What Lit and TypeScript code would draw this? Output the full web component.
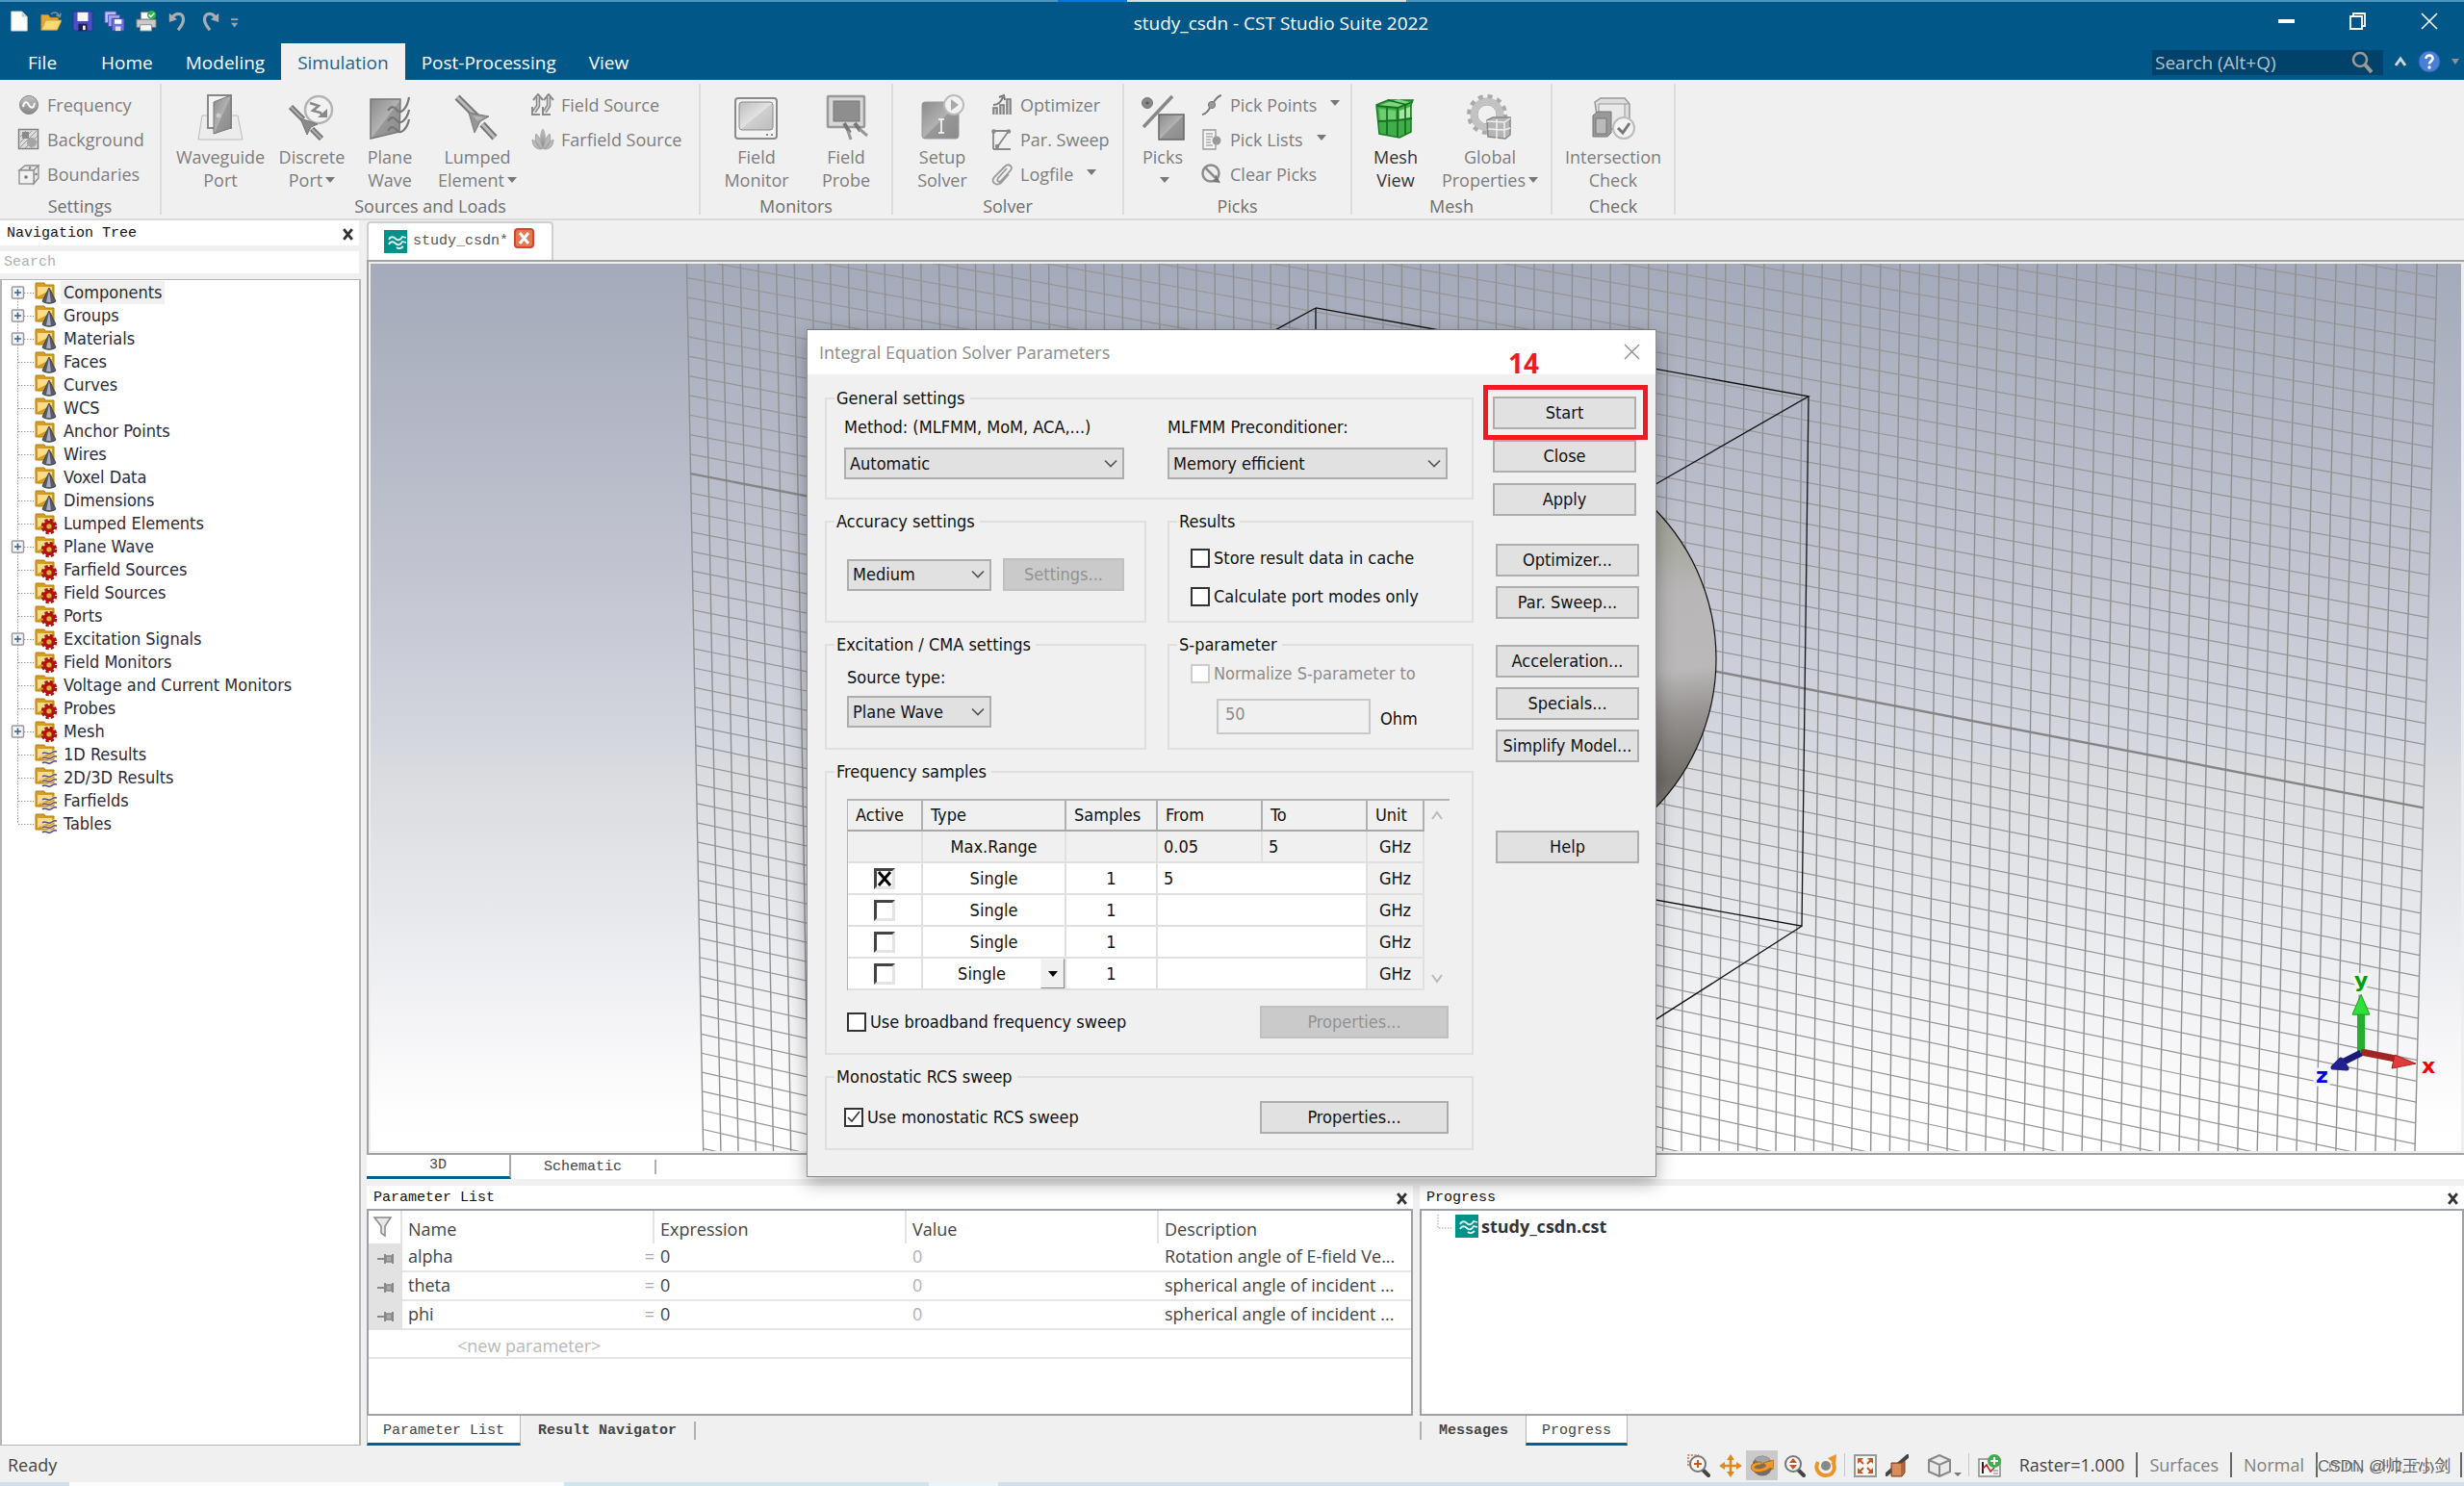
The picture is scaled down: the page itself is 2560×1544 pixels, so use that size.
import { LitElement, html, svg, css, nothing } from "lit";
import { customElement, state } from "lit/decorators.js";
import { classMap } from "lit/directives/class-map.js";

const G = "#8c8c8c";

/** Small 24x24 glyphs. */
const small: Record<string, unknown> = {
  frequency: svg`<circle cx="12" cy="12" r="9.5" fill="url(#gg)" stroke="#858585"/><path d="M6 14c1-6 4-6 6-2s5 4 6-2" fill="none" stroke="#fff" stroke-width="2"/>`,
  background: svg`<rect x="1.5" y="1.5" width="20" height="20" fill="#dcdcdc" stroke="#808080" stroke-width="1.5"/><path d="M3 9l6-6M3 15L15 3M3 20L20 3M8 21L21 8M14 21l7-7" stroke="#9a9a9a"/><rect x="5" y="4" width="7" height="7" fill="#8a8a8a"/><circle cx="15" cy="15" r="5" fill="#a5a5a5"/>`,
  boundaries: svg`<path d="M2 8l6-5h14l-5 5zM17 8l5-5v13l-5 6z" fill="#e6e6e6" stroke="${G}" stroke-width="1.3"/><rect x="2" y="8" width="15" height="14" fill="#f2f2f2" stroke="${G}" stroke-width="1.3"/><circle cx="9" cy="15" r="1.8" fill="#777"/><circle cx="13" cy="5.500" r="1.200" fill="#777"/><circle cx="19.500" cy="12" r="1.200" fill="#777"/>`,
  fieldsource: svg`<path d="M7 4v9l-4 6M18 4v9l-4 6" fill="none" stroke="#8a8a8a" stroke-width="4.500"/><path d="M7 4v9l-4 6M18 4v9l-4 6" fill="none" stroke="#d5d5d5" stroke-width="1.500"/><path d="M2 7l5-6 5 6M13 7l5-6 5 6M1 14v8h8M12 14v8h8" fill="none" stroke="#8a8a8a" stroke-width="2"/>`,
  farfield: svg`<path d="M12 1c3 5 3 11 0 21c-3-10-3-16 0-21z" fill="url(#gg)" stroke="#aaa"/><path d="M5 6c4 4 6 9 6 16C5 20 3 12 5 6zM19 6c-4 4-6 9-6 16c6-2 8-10 6-16zM1 12c4 2 7 5 9 10C4 22 1 18 1 12zM23 12c-4 2-7 5-9 10c6 0 9-4 9-10z" fill="#b9b9b9" stroke="#9c9c9c" stroke-width=".8"/>`,
  optimizer: svg`<path d="M3 22V15h4v7M10 22v-10h4v10M17 22V6h4v16" fill="#bbb" stroke="#777" stroke-width="1.500"/><path d="M3 12c4 0 8-3 10-8M9 4l5-2 1 5" fill="none" stroke="#777" stroke-width="2"/>`,
  sweep: svg`<path d="M3 22V3h16L7 20M3 22h18" fill="none" stroke="#888" stroke-width="1.800"/><circle cx="3.500" cy="3.500" r="2.200" fill="#888"/><circle cx="19" cy="3.500" r="2.200" fill="#888"/><circle cx="7" cy="19" r="2.200" fill="#888"/>`,
  logfile: svg`<path d="M17 6L8 16c-2 3 1 5 3 3L21 8c3-4-2-8-6-4L4 15c-4 5 2 10 7 6l8-9" fill="none" stroke="#999" stroke-width="1.800"/>`,
  pickpoints: svg`<path d="M2 22c6-1 7-6 10-10s5-9 10-10" fill="none" stroke="#777" stroke-width="1.800"/><circle cx="12" cy="12" r="3.600" fill="#999" stroke="#777"/>`,
  picklists: svg`<path d="M3 2h13v20H3z" fill="#f4f4f4" stroke="#999" stroke-width="1.300"/><path d="M6 6h7M6 9h7M6 12h5M6 15h5M6 18h7" stroke="#888" stroke-width="1.200"/><circle cx="17" cy="13" r="4.500" fill="#999"/>`,
  clearpicks: svg`<circle cx="11" cy="11" r="8.500" fill="#eee" stroke="#8c8c8c" stroke-width="2.500"/><path d="M5 5l13 13" stroke="#8c8c8c" stroke-width="2.500"/><path d="M12 20c3-1 4-4 4-8l5 9z" fill="#777"/>`,
};

/** Large 48x48 glyphs. */
const big: Record<string, unknown> = {
  waveguide: svg`<path d="M5 22h37l5 25H1z" fill="#ececec" stroke="#bbb"/><path d="M11 1h24v34H11z" fill="#f4f4f4" stroke="#888" stroke-width="2"/><path d="M17 8l18-7v34l-18 6z" fill="url(#gd)" stroke="#777"/><circle cx="22" cy="22" r="2.500" fill="#ccc"/>`,
  discrete: svg`<circle cx="31" cy="16" r="14" fill="#f2f2f2" stroke="#b4b4b4" stroke-width="2.500"/><path d="M22 9l9 3-6 5 8 2 2 4" fill="none" stroke="#888" stroke-width="2.500"/><path d="M30 24h10v-9z" fill="#888"/><path d="M2 13l13 13M24 36l10 10" stroke="#777" stroke-width="6"/><path d="M2 13l13 13M24 36l10 10" stroke="#b0b0b0" stroke-width="2"/><path d="M12 25l18 6-7 3-4 8z" fill="#8a8a8a" stroke="#777"/>`,
  plane: svg`<path d="M4 5h31l-1 34-30 7z" fill="url(#gd)" stroke="#777" stroke-width="1.500"/><path d="M22 17c4-6 7-4 10 0s10-2 12-14M22 28c4-6 7-4 10 0s10-2 12-12M22 38c4-6 7-4 10 0s10-2 12-12" fill="none" stroke="#777" stroke-width="2.200"/>`,
  lumped: svg`<path d="M3 3l20 20M29 31l13 14" stroke="#777" stroke-width="7"/><path d="M3 3l20 20M29 31l13 14" stroke="#bbb" stroke-width="3"/><path d="M15 19l21 4-9 5-6 12z" fill="#969696" stroke="#777"/><path d="M19 22l12 2-7 4z" fill="#b4b4b4"/>`,
  monitor: svg`<rect x="2" y="4" width="43" height="42" rx="3" fill="#f2f2f2" stroke="#8a8a8a" stroke-width="2"/><rect x="6" y="8" width="35" height="29" rx="3" fill="url(#gl)" stroke="#888"/><path d="M34 42h2M39 42h2" stroke="#888" stroke-width="2"/>`,
  probe: svg`<rect x="5" y="2" width="38" height="32" rx="1" fill="#d8d8d8" stroke="#999" stroke-width="2.500"/><rect x="11" y="7" width="27" height="21" fill="#8e8e8e" stroke="#777"/><path d="M22 30l6 10M33 30l6 8" stroke="#777" stroke-width="4"/><path d="M26 38l3 9M38 36l8 7" stroke="#999" stroke-width="3"/>`,
  setup: svg`<rect x="3" y="8" width="38" height="38" rx="3" fill="url(#gd)" stroke="#999"/><path d="M20 26h6M23 26v14M20 40h6" stroke="#fff" stroke-width="1.600"/><circle cx="36" cy="11" r="10" fill="#f3f3f3" stroke="#bbb" stroke-width="2"/><path d="M33 5l8 6-8 6z" fill="#aaa"/>`,
  picks: svg`<circle cx="8" cy="9" r="5.500" fill="#888" stroke="#777"/><circle cx="8" cy="9" r="1.500" fill="#555"/><path d="M34 2L4 34" stroke="#888" stroke-width="3.500"/><rect x="20" y="21" width="26" height="26" fill="url(#gd)" stroke="#666" stroke-width="1.500"/>`,
  mesh: svg`<path d="M4 11l12-5h26l-2 5v28l-12 6-21-4z" fill="#3fae49" stroke="#1c7a26" stroke-width="1.500"/><path d="M5 12l21 2 15-5-14-4z" fill="#7ed67e"/><path d="M7 15l17 2v10l-16 1z" fill="#6dcf70"/><path d="M28 17l11-4v11l-11 3z" fill="#a5e6a0"/><path d="M5 12l21 2 15-6M26 14v31M5 28l21-1 15-2M15 13v29M34 10v32M16 6l20 5" fill="none" stroke="#176f22" stroke-width="1.800"/>`,
  global: svg`<circle cx="21" cy="21" r="14" fill="none" stroke="#c2c2c2" stroke-width="7"/><circle cx="21" cy="21" r="19" fill="none" stroke="#aaa" stroke-width="4" stroke-dasharray="5 4.950"/><circle cx="21" cy="21" r="10" fill="#f0f0f0" stroke="#aaa"/><path d="M21 27l6-3h18v18l-5 4-18-2z" fill="#b5b5b5" stroke="#888" stroke-width="1.500"/><path d="M21 28l18 1 6-4M31 26v20M22 36l17 1 6-2M39 29v16" fill="none" stroke="#eee" stroke-width="1.500"/>`,
  intersection: svg`<path d="M5 8l6-4h25l5 6v26H9z" fill="#ddd" stroke="#999" stroke-width="1.500"/><path d="M9 10h27v26H9zM36 10l5 0" fill="#e9e9e9" stroke="#999"/><path d="M3 22l5-4h14v22l-4 4H3z" fill="#999" stroke="#777"/><path d="M6 25h11v16H6z" fill="#bbb" stroke="#777"/><circle cx="35" cy="35" r="11" fill="#f3f3f3" stroke="#bbb" stroke-width="2"/><path d="M29 35l5 5 7-10" fill="none" stroke="#777" stroke-width="3"/>`,
};

const defs = svg`<defs>
  <linearGradient id="gg" x1="0" y1="0" x2="0" y2="1"><stop offset="0" stop-color="#c4c4c4"/><stop offset="1" stop-color="#858585"/></linearGradient>
  <linearGradient id="gd" x1="0" y1="0" x2="1" y2="1"><stop offset="0" stop-color="#8b8b8b"/><stop offset=".5" stop-color="#b2b2b2"/><stop offset=".52" stop-color="#989898"/><stop offset="1" stop-color="#8b8b8b"/></linearGradient>
  <linearGradient id="gl" x1="0" y1="0" x2="1" y2="1"><stop offset="0" stop-color="#bdbdbd"/><stop offset=".5" stop-color="#e2e2e2"/><stop offset=".52" stop-color="#cfcfcf"/><stop offset="1" stop-color="#bdbdbd"/></linearGradient>
</defs>`;

const icon = (name: string, size: "small" | "big") =>
  size === "small"
    ? html`<svg class="ic24" viewBox="0 0 24 24" aria-hidden="true">${defs}${small[name]}</svg>`
    : html`<svg class="ic48" viewBox="0 0 48 48" aria-hidden="true">${defs}${big[name]}</svg>`;

const quick = [
  ["New", svg`<path d="M3 1h12l6 6v16H3z" fill="#fdfdfd" stroke="#c9c9c9"/><path d="M15 1v6h6z" fill="#ccc"/>`],
  ["Open", svg`<path d="M1 22V5h8l2 3h9v4" fill="#e5a93a" stroke="#c98a1b"/><path d="M1 22l5-11h18l-5 11z" fill="#ffd873" stroke="#d29a2a"/><path d="M12 4c4-3 8-2 9 2M18 5l4 2 1-4" fill="none" stroke="#7f98a8" stroke-width="1.500"/>`],
  ["Save", svg`<path d="M1 1h22v22H3l-2-2z" fill="#4c4fc4" stroke="#2c2f96"/><path d="M6 2h12v10H6z" fill="#f6f6ff"/><path d="M7 15h10v8H7z" fill="#1d1f4a"/><path d="M12 17h3v5h-3z" fill="#eee"/>`],
  ["Save all", svg`<path d="M1 1h13v13H1z" fill="#b9bdf0" stroke="#4a4fb8"/><path d="M5 5h13v13H5z" fill="#a2a8ea" stroke="#4a4fb8"/><path d="M9 9h14v14H9z" fill="#6d73d8" stroke="#3a3f9e"/><path d="M12 10h8v5h-8z" fill="#fff"/><path d="M13 18h6v5h-6z" fill="#dde"/>`],
  ["Print", svg`<path d="M6 2h11v8H6z" fill="#fff" stroke="#999"/><path d="M1 10h22v9H1z" fill="#c9c9c9" stroke="#777"/><path d="M5 16h13v7H5z" fill="#f5f5f5" stroke="#888"/><circle cx="18" cy="5" r="5" fill="#31b54a"/><path d="M15 5l2 2 4-4" fill="none" stroke="#fff" stroke-width="1.500"/>`],
  ["Undo", svg`<path d="M5 10c2-8 13-9 13 0 0 5-3 8-6 12" fill="none" stroke="#a7adb2" stroke-width="3.500"/><path d="M2 3v10l9-3z" fill="#a7adb2"/>`],
  ["Redo", svg`<path d="M19 10C17 2 6 1 6 10c0 5 3 8 6 12" fill="none" stroke="#a7adb2" stroke-width="3.500"/><path d="M22 3v10l-9-3z" fill="#a7adb2"/>`],
] as const;

type Big = { icon: string; lines: [string, string]; drop?: boolean; on?: boolean };
type Small = { icon: string; text: string; drop?: boolean };
const ribbon: { id: string; label: string; bigs?: Big[]; after?: Small[] }[] = [
  { id: "settings", label: "Settings", after: [{ icon: "frequency", text: "Frequency" }, { icon: "background", text: "Background" }, { icon: "boundaries", text: "Boundaries" }] },
  {
    id: "sources", label: "Sources and Loads",
    bigs: [{ icon: "waveguide", lines: ["Waveguide", "Port"] }, { icon: "discrete", lines: ["Discrete", "Port"], drop: true }, { icon: "plane", lines: ["Plane", "Wave"] }, { icon: "lumped", lines: ["Lumped", "Element"], drop: true }],
    after: [{ icon: "fieldsource", text: "Field Source" }, { icon: "farfield", text: "Farfield Source" }],
  },
  { id: "monitors", label: "Monitors", bigs: [{ icon: "monitor", lines: ["Field", "Monitor"] }, { icon: "probe", lines: ["Field", "Probe"] }] },
  { id: "solver", label: "Solver", bigs: [{ icon: "setup", lines: ["Setup", "Solver"] }], after: [{ icon: "optimizer", text: "Optimizer" }, { icon: "sweep", text: "Par. Sweep" }, { icon: "logfile", text: "Logfile", drop: true }] },
  { id: "picks", label: "Picks", bigs: [{ icon: "picks", lines: ["Picks", ""], drop: true }], after: [{ icon: "pickpoints", text: "Pick Points", drop: true }, { icon: "picklists", text: "Pick Lists", drop: true }, { icon: "clearpicks", text: "Clear Picks" }] },
  { id: "mesh", label: "Mesh", bigs: [{ icon: "mesh", lines: ["Mesh", "View"], on: true }, { icon: "global", lines: ["Global", "Properties"], drop: true }] },
  { id: "check", label: "Check", bigs: [{ icon: "intersection", lines: ["Intersection", "Check"] }] },
];

type Node = [string, "cone" | "gear" | "wave", boolean?];
const tree: Node[] = [
  ["Components", "cone", true], ["Groups", "cone", true], ["Materials", "cone", true], ["Faces", "cone"], ["Curves", "cone"], ["WCS", "cone"],
  ["Anchor Points", "cone"], ["Wires", "cone"], ["Voxel Data", "cone"], ["Dimensions", "cone"], ["Lumped Elements", "gear"],
  ["Plane Wave", "gear", true], ["Farfield Sources", "gear"], ["Field Sources", "gear"], ["Ports", "gear"], ["Excitation Signals", "gear", true],
  ["Field Monitors", "gear"], ["Voltage and Current Monitors", "gear"], ["Probes", "gear"], ["Mesh", "gear", true],
  ["1D Results", "wave"], ["2D/3D Results", "wave"], ["Farfields", "wave"], ["Tables", "wave"],
];

const folderMark = {
  cone: svg`<path d="M15 7l-7 14c3 3 11 3 14 0z" fill="#565b68" stroke="#2f323a" stroke-width=".8"/><path d="M15 8l-3 14h5z" fill="#a9aec0"/>`,
  gear: svg`<circle cx="15" cy="15" r="6.500" fill="none" stroke="#b01313" stroke-width="3.500" stroke-dasharray="3.100 2"/><circle cx="15" cy="15" r="4.500" fill="none" stroke="#b01313" stroke-width="3.500"/><circle cx="15" cy="15" r="2" fill="#e3b04b"/>`,
  wave: svg`<path d="M8 11c3-3 5 1 8 0s3-3 7-2M8 16c3-3 5 1 8 0s3-3 7-2M8 21c3-3 5 1 8 0s3-3 7-2" fill="none" stroke="#f6e7b4" stroke-width="3"/><path d="M8 11c3-3 5 1 8 0s3-3 7-2M8 16c3-3 5 1 8 0s3-3 7-2M8 21c3-3 5 1 8 0s3-3 7-2" fill="none" stroke="#544f92" stroke-width="1.500"/>`,
};

const cstLogo = html`<svg class="ic24" viewBox="0 0 24 24" aria-hidden="true"><rect width="24" height="24" fill="#00918a"/><path d="M5 10c2-4 5-3 7-1s5 2 7-2l4 1M5 15c2-4 5-3 7-1s5 2 7-2l4 1M13 18c2 2 5 1 7-1" fill="none" stroke="#e4f5f3" stroke-width="1.800"/></svg>`;

@customElement("cst-viewport")
export class CstViewport extends LitElement {
  static styles = css`
    :host { display: flex; flex-direction: column; min-height: 0; }
    .scene { flex: 1 1 0; min-height: 0; width: 100%; display: block; }
    .axis { font: bold 22px "DejaVu Sans", sans-serif; paint-order: stroke; stroke: #f4f5f8; stroke-width: 7px; stroke-linejoin: round; }
  `;

  private verticals() {
    const n = 92, k = 0.0614;
    let d = "";
    for (let i = 0; i <= n; i++) {
      const u = i / n, f = (u * (1 - k)) / (1 - k * u);
      d += `M${(714.5 + 1818.5 * f).toFixed(1)} 274L${(731.7 + 1778.3 * f).toFixed(1)} 1197`;
    }
    return d;
  }

  private horizontal(j: number) {
    const yl = 492.4 + 20.3 * j - 0.007 * j * j, yr = 840 + 21.95 * j - 0.006 * j * j;
    const xl = 714.5 + ((yl - 274) * 17.2) / 923, xr = 2533 - ((yr - 274) * 23) / 923;
    return `M${xl.toFixed(1)} ${yl.toFixed(1)}L${xr.toFixed(1)} ${yr.toFixed(1)}`;
  }

  render() {
    let rows = "";
    for (let j = -26; j <= 35; j++) if (j !== 0) rows += this.horizontal(j);
    return html`<svg class="scene" viewBox="386 274 2172 923" preserveAspectRatio="none" role="img" aria-label="3D view">
      <defs>
        <linearGradient id="sky" x1="0" y1="0" x2="0" y2="1">
          <stop offset="0" stop-color="#a4aaba"/><stop offset=".36" stop-color="#c3c5d1"/><stop offset=".55" stop-color="#d5d8e0"/>
          <stop offset=".57" stop-color="#dadbdf"/><stop offset=".75" stop-color="#e9eaee"/><stop offset=".96" stop-color="#fefefe"/><stop offset="1" stop-color="#ffffff"/>
        </linearGradient>
        <linearGradient id="ball" gradientUnits="userSpaceOnUse" x1="1740" y1="500" x2="1775" y2="860">
          <stop offset="0" stop-color="#9b9d91"/><stop offset=".18" stop-color="#a8a99f"/><stop offset=".32" stop-color="#b8b6b6"/><stop offset=".54" stop-color="#bab8b8"/>
          <stop offset=".68" stop-color="#93908e"/><stop offset=".85" stop-color="#716e68"/><stop offset="1" stop-color="#8a8781"/>
        </linearGradient>
      </defs>
      <rect x="386" y="274" width="2172" height="923" fill="url(#sky)"/>
      <path d="${this.verticals()}" stroke="#8f8f8f" stroke-width="1.4" fill="none"/>
      <path d="${rows}" stroke="#959595" stroke-width="1.2" fill="none"/>
      <path d="${this.horizontal(0)}" stroke="#858585" stroke-width="2.4"/>
      <circle cx="1562" cy="685" r="222" fill="url(#ball)" stroke="#111" stroke-width="1.2"/>
      <path d="M1368 320L1326 343L1090 470M1368 320L1880 412L1720 504L1500 630M1368 320V800M1880 412L1873 963L1500 896M1873 963L1720 1061L1500 1196" fill="none" stroke="#111" stroke-width="1.3"/>
      <path d="M2454 1094V1052" stroke="#25b02c" stroke-width="8"/><path d="M2454 1034l9 21h-18z" fill="#2ee03a" stroke="#1c9b24"/>
      <path d="M2454 1094l36 7" stroke="#a32222" stroke-width="7"/><path d="M2511 1106l-22-9-3 14z" fill="#e33a3a" stroke="#a32222"/>
      <path d="M2454 1095l-18 9" stroke="#1a1a78" stroke-width="7"/><path d="M2425 1110l8-8 6 9z" fill="#22228f" stroke="#22228f" stroke-width="5" stroke-linejoin="round"/>
      <text class="axis" x="2447" y="1027" fill="#00a000">y</text>
      <text class="axis" x="2517" y="1116" fill="#f00000">x</text>
      <text class="axis" x="2407" y="1126" fill="#0000f0">z</text>
    </svg>`;
  }
}

@customElement("solver-dialog")
export class SolverDialog extends LitElement {
  static styles = css`
    :host { display: block; font: 18px/22px "DejaVu Sans Condensed", "DejaVu Sans", sans-serif; color: #111; }
    * { box-sizing: border-box; }
    .window { background: #f0f0f0; border: 1px solid #8e8e92; border-top-color: #777b88; box-shadow: 0 6px 18px rgba(0, 0, 0, .32); padding-bottom: 27px; }
    .title { display: flex; align-items: center; justify-content: space-between; height: 46px; padding: 0 16px 1px 12px; background: #fff; }
    .title h2 { margin: 0; font: 18px/24px "Open Sans", "Noto Sans", sans-serif; color: #8a8a8a; }
    .x { border: 0; padding: 0; background: none; line-height: 0; }
    .body { display: flex; align-items: flex-start; gap: 20px; padding: 15px 0 0 18px; }
    .groups { width: 674px; display: flex; flex-direction: column; gap: 13px; }
    .pair { display: grid; grid-template-columns: 334px 318px; gap: 22px; }
    fieldset { margin: 0; padding: 0; min-width: 0; border: 2px solid #dfdfdf; }
    legend { margin-left: 8px; padding: 0 5px 0 2px; line-height: 20px; white-space: nowrap; }
    .general { min-height: 93px; padding: 9px 0 0 18px; }
    .cols { display: grid; grid-template-columns: 291px 291px; gap: 45px; }
    .stack { display: flex; flex-direction: column; align-items: flex-start; gap: 10px; white-space: nowrap; }
    .mid { min-height: 93px; padding: 28px 0 0 21px; }
    .results { min-height: 93px; padding: 17px 0 0 22px; }
    .low { min-height: 97px; }
    .source { padding: 13px 0 0 21px; }
    .source .stack { gap: 8px; }
    .sparam { padding: 9px 0 0 22px; }
    .freq { min-height: 282px; padding: 18px 0 0 21px; }
    .mono { min-height: 64px; padding: 15px 0 0 18px; }
    .line { display: flex; align-items: center; gap: 12px; }
    .spread { display: flex; align-items: center; justify-content: space-between; padding-right: 24px; }
    .freq .spread { margin-top: 16px; }
    .checks { display: flex; flex-direction: column; gap: 18px; }
    .check { display: flex; align-items: center; gap: 4px; white-space: nowrap; }
    .check input { appearance: none; flex: none; margin: 0; width: 20px; height: 20px; border: 2px solid #333; background: #fff; }
    .check input:checked { background: #fff url('data:image/svg+xml,<svg xmlns="http://www.w3.org/2000/svg" viewBox="0 0 16 16"><path d="M2 8l4 4 8-10" fill="none" stroke="%23333" stroke-width="1.6"/></svg>'); }
    .check input:disabled { border-color: #ccc; }
    .off { color: #8c8c8c; }
    .select { display: grid; align-items: center; width: 291px; }
    .select.short { width: 150px; }
    .select select, .select svg { grid-area: 1 / 1; }
    .select svg { justify-self: end; margin-right: 6px; pointer-events: none; }
    select { appearance: none; width: 100%; height: 33px; margin: 0; padding: 0 4px; border: 2px solid #adadad; border-radius: 0; background: #e1e1e1; color: inherit; font: inherit; }
    button.btn { width: 149px; height: 34px; padding: 0; border: 2px solid #adadad; border-radius: 0; background: #e1e1e1; color: inherit; font: inherit; white-space: nowrap; }
    button.btn:disabled { background: #cacaca; border-color: #c0c0c0; color: #929292; }
    button.btn.wide { width: 196px; }
    button.btn.set { width: 126px; }
    .ohm { display: flex; align-items: center; gap: 10px; margin: 15px 0 0 27px; }
    .ohm input { width: 160px; height: 37px; padding: 0 7px 6px; border: 2px solid #c8c8c8; background: #f0f0f0; color: #8c8c8c; font: inherit; }
    .ohm label { padding-top: 4px; }
    .actions { display: flex; flex-direction: column; padding-top: 8px; }
    .set1 { display: flex; flex-direction: column; gap: 11px; }
    .set2 { display: flex; flex-direction: column; gap: 10px; margin: 29px 0 0 3px; }
    .set3 { margin-top: 27px; }
    .set4 { margin-top: 71px; }
    .start { position: relative; }
    .mark { position: absolute; left: -10px; top: -12px; width: 171px; height: 57px; border: 5px solid #ee1b22; pointer-events: none; }
    .num { position: absolute; left: 16px; top: -53px; font: bold 28px/36px "Open Sans", "Noto Sans", sans-serif; color: #ee1b22; }
    .grid { display: flex; width: 626px; border: 2px solid #b4b4b4; border-width: 2px 0 0 1px; }
    table { width: 599px; table-layout: fixed; border-collapse: separate; border-spacing: 0; }
    th, td { height: 33px; padding: 0; font-weight: normal; text-align: center; line-height: 22px; border-right: 2px solid #e0e0e0; border-bottom: 2px solid #e0e0e0; background: #fff; }
    th { height: 32px; padding-left: 8px; text-align: left; background: #f0f0f0; border-right-color: #b0b0b0; border-bottom-color: #a8a8a8; }
    .ro, td.unit { background: #f0f0f0; }
    .lft { text-align: left; padding-left: 6px; }
    .c1 { width: 78px; } .c2 { width: 149px; } .c3 { width: 95px; } .c4 { width: 109px; } .c5 { width: 109px; } .c6 { width: 59px; }
    td input { appearance: none; display: block; margin: 0 auto; width: 22px; height: 22px; border: 3px solid #333; border-color: #444 #e4e4e4 #e4e4e4 #444; background: #fff; }
    td input:checked { background: #fff url('data:image/svg+xml,<svg xmlns="http://www.w3.org/2000/svg" viewBox="0 0 16 16"><path d="M2 1l12 14M14 1L2 15" fill="none" stroke="%23000" stroke-width="3"/></svg>'); }
    .cell { display: flex; align-items: center; height: 31px; }
    .cell span { flex: 1; }
    .cell button { width: 25px; height: 31px; padding: 0; line-height: 0; border: 1px solid #f8f8f8; border-right-color: #888; border-bottom-color: #888; background: #f0f0f0; }
    .scroll { display: flex; flex-direction: column; justify-content: space-between; align-items: center; width: 27px; padding: 9px 0 6px; }
  `;

  @state() private active = [true, false, false, false];

  private chev() {
    return html`<svg width="16" height="10" viewBox="0 0 16 10" aria-hidden="true"><path d="M2 1.500l6 6 6-6" fill="none" stroke="#555" stroke-width="1.700"/></svg>`;
  }

  private row(on: boolean, i: number) {
    const last = i === 3;
    return html`<tr>
      <td><input type="checkbox" aria-label="Sample ${i + 1} active" .checked=${on} @change=${() => (this.active = this.active.map((v, k) => (k === i ? !v : v)))} /></td>
      <td>${last
        ? html`<div class="cell"><span>Single</span><button aria-label="Choose type"><svg width="10" height="6" viewBox="0 0 10 6"><path d="M0 0h10L5 6z" fill="#000"/></svg></button></div>`
        : "Single"}</td>
      <td>1</td><td class="lft" colspan="2">${i === 0 ? "5" : nothing}</td><td class="unit">GHz</td>
    </tr>`;
  }

  render() {
    return html`<section class="window" role="dialog" aria-labelledby="dt">
      <div class="title"><h2 id="dt">Integral Equation Solver Parameters</h2>
        <button class="x" aria-label="Close dialog"><svg width="17" height="17" viewBox="0 0 17 17"><path d="M1 1l15 15M16 1L1 16" stroke="#888" stroke-width="1.200"/></svg></button></div>
      <div class="body">
        <div class="groups">
          <fieldset><legend>General settings</legend><div class="general cols">
            <div class="stack"><label for="m">Method: (MLFMM, MoM, ACA,...)</label><div class="select"><select id="m"><option>Automatic</option></select>${this.chev()}</div></div>
            <div class="stack"><label for="p">MLFMM Preconditioner:</label><div class="select"><select id="p"><option>Memory efficient</option></select>${this.chev()}</div></div>
          </div></fieldset>
          <div class="pair">
            <fieldset><legend>Accuracy settings</legend><div class="mid"><div class="line">
              <div class="select short"><select aria-label="Accuracy"><option>Medium</option></select>${this.chev()}</div>
              <button class="btn set" disabled>Settings...</button></div></div></fieldset>
            <fieldset><legend>Results</legend><div class="results checks">
              <label class="check"><input type="checkbox" />Store result data in cache</label>
              <label class="check"><input type="checkbox" />Calculate port modes only</label></div></fieldset>
          </div>
          <div class="pair">
            <fieldset><legend>Excitation / CMA settings</legend><div class="low source"><div class="stack">
              <label for="s">Source type:</label><div class="select short"><select id="s"><option>Plane Wave</option></select>${this.chev()}</div></div></div></fieldset>
            <fieldset><legend>S-parameter</legend><div class="low sparam">
              <label class="check off"><input type="checkbox" disabled />Normalize S-parameter to</label>
              <div class="ohm"><input id="z" value="50" disabled /><label for="z">Ohm</label></div></div></fieldset>
          </div>
          <fieldset><legend>Frequency samples</legend><div class="freq">
            <div class="grid"><table>
              <thead><tr><th class="c1">Active</th><th class="c2">Type</th><th class="c3">Samples</th><th class="c4">From</th><th class="c5">To</th><th class="c6">Unit</th></tr></thead>
              <tbody>
                <tr><td class="ro"></td><td class="ro">Max.Range</td><td class="ro"></td><td class="ro lft">0.05</td><td class="ro lft">5</td><td class="unit">GHz</td></tr>
                ${this.active.map((v, i) => this.row(v, i))}
              </tbody></table>
              <div class="scroll" aria-hidden="true">
                <svg width="12" height="12" viewBox="0 0 12 12"><path d="M1 10l5-7 5 7" fill="none" stroke="#bbb" stroke-width="2"/></svg>
                <svg width="12" height="12" viewBox="0 0 12 12"><path d="M1 2l5 7 5-7" fill="none" stroke="#bbb" stroke-width="2"/></svg>
              </div></div>
            <div class="spread"><label class="check"><input type="checkbox" />Use broadband frequency sweep</label><button class="btn wide" disabled>Properties...</button></div>
          </div></fieldset>
          <fieldset><legend>Monostatic RCS sweep</legend><div class="mono"><div class="spread">
            <label class="check"><input type="checkbox" checked />Use monostatic RCS sweep</label><button class="btn wide">Properties...</button></div></div></fieldset>
        </div>
        <div class="actions">
          <div class="set1"><div class="start"><button class="btn">Start</button><span class="mark"></span><span class="num">14</span></div>
            <button class="btn">Close</button><button class="btn">Apply</button></div>
          <div class="set2"><button class="btn">Optimizer...</button><button class="btn">Par. Sweep...</button></div>
          <div class="set2 set3"><button class="btn">Acceleration...</button><button class="btn">Specials...</button><button class="btn">Simplify Model...</button></div>
          <div class="set2 set4"><button class="btn">Help</button></div>
        </div>
      </div>
    </section>`;
  }
}

@customElement("app-root")
export class AppRoot extends LitElement {
  static styles = css`
    :host { display: flex; flex-direction: column; position: relative; height: 100vh; min-height: 1300px; overflow: hidden; background: #f0f0f0; font: 18px/24px "Open Sans", "Noto Sans", sans-serif; color: #444; }
    * { box-sizing: border-box; }
    button { margin: 0; padding: 0; border: 0; background: none; color: inherit; font: inherit; }
    .ic24 { width: 24px; height: 24px; display: block; flex: none; }
    .ic48 { width: 48px; height: 48px; display: block; margin: 0 auto; }
    .edge { display: grid; grid-template-columns: 1099fr 72fr 290fr 1099fr; height: 2px; background: #4b95bf; }
    .edge .b { background: #0078d7; } .edge .w { background: #dcdcdc; }
    .top { background: #005788; color: #fff; }
    .bar { display: grid; grid-template-columns: 1fr auto 1fr; align-items: center; height: 43px; }
    .quick { display: flex; align-items: center; gap: 11px; padding: 0 0 4px 9px; }
    .quick svg { width: 22px; height: 22px; display: block; }
    .wintitle { margin: 0; padding-left: 102px; font: 19px/24px "Open Sans", "Noto Sans", sans-serif; }
    .winbtns { display: flex; justify-content: flex-end; gap: 54px; padding: 0 26px 4px 0; }
    .winbtns svg { display: block; }
    .tabs { display: flex; align-items: stretch; height: 38px; font-size: 19px; }
    .tabs button { padding: 2px 17px 0; line-height: 36px; }
    .tabs button.file { padding: 2px 29px 0; }
    .tabs button.on { background: #f0f0f0; color: #1f6291; }
    .tools { display: flex; align-items: center; gap: 11px; margin-left: auto; padding-right: 5px; }
    .tabs .tools button { padding: 0; line-height: 24px; }
    .tools svg { display: block; }
    .find { display: flex; align-items: center; width: 240px; height: 26px; margin-top: 2px; padding: 0 10px 0 3px; background: #00426a; }
    .find input { flex: 1; min-width: 0; padding: 0; border: 0; outline: 0; background: none; color: #c3ced6; font: 19px/24px "Open Sans", "Noto Sans", sans-serif; }
    .find input::placeholder { color: #b4c2cc; opacity: 1; }
    .ribbon { display: flex; height: 146px; padding: 4px 0; border-bottom: 2px solid #dadada; color: #7d7d7d; }
    .group { display: flex; flex-direction: column; border-right: 2px solid #dcdcdc; }
    .cmds { display: flex; flex: 1; }
    .label { line-height: 24px; height: 21px; text-align: center; color: #6e6e6e; }
    .big { display: block; padding-top: 7px; text-align: center; line-height: 24px; white-space: nowrap; }
    .big.on { color: #333; }
    .big .txt { display: block; padding-top: 5px; }
    .smalls { display: flex; flex-direction: column; padding-top: 4px; }
    .smalls button { display: flex; align-items: center; gap: 7px; height: 36px; white-space: nowrap; }
    .drop { display: inline-block; margin: 0 0 4px 3px; border: 5px solid transparent; border-top: 6px solid #777; border-bottom: 0; }
    .smalls .drop { margin-left: 7px; }
    .settings { width: 168px; } .settings .smalls { padding-left: 18px; }
    .sources { width: 560px; } .monitors { width: 200px; } .solver { width: 240px; } .picks { width: 237px; } .mesh { width: 208px; } .check { width: 128px; }
    .sources .cmds { display: grid; grid-template-columns: 110px 80px 82px 100px 1fr; padding-left: 6px; }
    .sources .smalls { padding-left: 6px; }
    .monitors .cmds { display: grid; grid-template-columns: 94px 92px; padding-left: 11px; }
    .solver .cmds { display: grid; grid-template-columns: 90px 1fr; padding-left: 6px; }
    .solver .smalls { padding-left: 5px; }
    .picks .cmds { display: grid; grid-template-columns: 78px 1fr; padding-left: 1px; }
    .picks .smalls { padding-left: 0; }
    .mesh .cmds { display: grid; grid-template-columns: 90px 106px; }
    .check .cmds { display: grid; grid-template-columns: 1fr; }
    .main { flex: 1; min-height: 0; display: grid; grid-template-columns: 375px minmax(0, 1fr); gap: 6px; }
    .nav { display: flex; flex-direction: column; min-height: 0; }
    .phead { display: flex; align-items: center; justify-content: space-between; flex: none; height: 24px; padding: 2px 5px 0 7px; background: #fff; color: #111; font: 15px/22px "Liberation Mono", monospace; }
    .phead h2 { margin: 0; font: inherit; }
    .phead svg { display: block; }
    .nav .phead { height: 26px; margin-right: 2px; }
    .nsearch { height: 23px; margin: 6px 2px 6px 0; padding: 0 4px; border: 0; background: #fff; font: 15px/20px "Liberation Mono", monospace; }
    .nsearch::placeholder { color: #b0b0b0; opacity: 1; }
    .tree { flex: 1; margin: 0; padding: 1px 0 0; list-style: none; border: 2px solid #b4b6b8; border-width: 1px 2px 1px 2px; background: #fff; color: #2b2b38; font: 18px/22px "DejaVu Sans Condensed", "DejaVu Sans", sans-serif; }
    .tree li { display: flex; align-items: center; height: 24px; white-space: nowrap; }
    .tree svg { display: block; flex: none; }
    .tree span { padding: 1px 3px; margin-left: 3px; }
    .tree span.sel { background: #f0f0f0; }
    .work { display: flex; flex-direction: column; min-width: 0; min-height: 0; }
    .docs { display: flex; align-items: flex-end; height: 41px; flex: none; }
    .doc { display: flex; align-items: center; gap: 6px; height: 40px; padding: 0 18px 0 16px; background: #fff; border: 2px solid #cfcfcf; border-bottom: 0; border-radius: 4px 4px 0 0; color: #555; font: 15px/20px "Liberation Mono", monospace; }
    .frame { flex: 1; min-height: 0; display: flex; flex-direction: column; padding: 2px 3px 2px 2px; border: 2px solid #a2a2a2; border-right: 0; background: #eee; }
    .frame cst-viewport { flex: 1; }
    .strip { display: flex; align-items: stretch; flex: none; height: 25px; background: #fff; color: #444; font: 15px/22px "Liberation Mono", monospace; }
    .strip button { padding: 0 24px; }
    .strip .on { padding: 0; width: 150px; border-right: 2px solid #a8a8a8; border-bottom: 3px solid #005f93; }
    .rule { width: 2px; margin: 5px 0; background: #b0b0b0; }
    .strip .schem { padding: 0 34px; }
    .docks { display: grid; grid-template-columns: 1087fr 1085fr; gap: 7px; flex: none; margin-top: 7px; }
    .dock { display: flex; flex-direction: column; min-width: 0; }
    .pane { flex: none; height: 215px; border: 2px solid #9da1a5; background: #fff; }
    .ptabs { display: flex; height: 31px; font: 15px/28px "Liberation Mono", monospace; color: #444; }
    .ptabs button { padding: 1px 18px 0; font-weight: bold; }
    .ptabs button.on { background: #fff; font-weight: normal; border: 1px solid #b8b8b8; border-width: 0 1px 3px; border-bottom-color: #005f93; padding: 2px 16px 0; }
    .ptabs .rule { margin: 6px 0; }
    table { width: 100%; table-layout: fixed; border-collapse: separate; border-spacing: 0; color: #444; font-size: 18px; }
    th { height: 34px; padding: 3px 0 0 6px; font-weight: normal; text-align: left; border-right: 2px solid #e4e4e4; }
    th:last-child { border-right: 0; }
    td { height: 30px; padding: 0 0 2px 6px; line-height: 24px; border-bottom: 2px solid #e6e6e6; white-space: nowrap; }
    .ci { width: 35px; padding: 4px; } td.ci { background: #e2e2e2; border-color: #e2e2e2; padding: 4px 0 0 9px; }
    .ci svg { display: block; }
    .split { display: flex; justify-content: space-between; } .split i { font-style: normal; color: #aaa; }
    .dim { color: #b0b0b0; }
    td.new { color: #b8b8b8; padding: 4px 0 0 92px; }
    .item { display: flex; align-items: center; gap: 3px; padding: 4px 0 0 16px; color: #333; font-weight: bold; }
    .status { display: flex; align-items: center; flex: none; height: 38px; padding: 2px 2px 0 8px; color: #444; }
    .status .tb { display: flex; align-items: center; margin-left: auto; }
    .status .tb button { padding: 4px 4px 3px 5px; }
    .status .tb button.on { background: #cacaca; }
    .status .tb svg { display: block; }
    .sp { width: 1px; height: 24px; margin: 0 4px 0 3px; background: #c8c8c8; }
    .status .v { flex: none; width: 2px; height: 26px; margin: 0 12px; background: #666; }
    .status .v:nth-last-of-type(-n + 2) { margin-right: 0; }
    .status .v:last-child { margin: 0; }
    .status .grey { color: #808080; }
    .raster { margin-left: 15px; }
    .units { position: relative; width: 148px; color: #777; text-align: center; white-space: nowrap; }
    .wm { position: absolute; left: 0; top: 2px; font: 17px/24px "Liberation Sans", "Noto Sans CJK SC", sans-serif; color: #666; text-shadow: -1px -1px 0 #fff; }
    .task { display: grid; grid-template-columns: 72fr 514fr 379fr 72fr 1523fr; height: 4px; flex: none; }
    .task i { background: #d3deeb; } .task i:nth-child(2) { background: #fbfbfb; } .task i:nth-child(3) { background: #cfe4ee; } .task i:nth-child(4) { background: #e9f3f8; }
    .float { position: absolute; left: 50%; top: 342px; width: 883px; margin-left: -442px; }
  `;

  @state() private tab = "Simulation";

  private close(size = 13) {
    return html`<svg width="${size}" height="${size}" viewBox="0 0 12 12"><path d="M2 1l8 10M10 1L2 11" stroke="#333" stroke-width="2.600"/></svg>`;
  }

  private ribbonGroup(g: (typeof ribbon)[number]) {
    return html`<div class="group ${g.id}"><div class="cmds">
      ${(g.bigs ?? []).map((b) => html`<button class=${classMap({ big: true, on: !!b.on })}>${icon(b.icon, "big")}<span class="txt">${b.lines[0]}<br />${b.lines[1]}${b.drop ? html`<span class="drop"></span>` : nothing}</span></button>`)}
      ${g.after ? html`<div class="smalls">${g.after.map((s) => html`<button>${icon(s.icon, "small")}<span>${s.text}</span>${s.drop ? html`<span class="drop"></span>` : nothing}</button>`)}</div>` : nothing}
    </div><div class="label">${g.label}</div></div>`;
  }

  private treeRow([name, kind, open]: Node, i: number) {
    const last = i === tree.length - 1;
    return html`<li>
      <svg width="34" height="24" viewBox="0 0 34 24" aria-hidden="true">
        <path d="M16.500 ${i === 0 ? 12 : 0}V${last ? 12 : 24}M17 12.500H33" stroke="#999" stroke-dasharray="1.500 1.500" fill="none"/>
        ${open ? svg`<rect x="10.500" y="6" width="12" height="12" rx="1" fill="#f6f6f6" stroke="#999" stroke-width="1.500"/><path d="M13 12h7M16.500 8.500v7" stroke="#3d5a9e" stroke-width="1.600"/>` : nothing}
      </svg>
      <svg width="24" height="24" viewBox="0 0 24 24" aria-hidden="true"><path d="M1 2h9l1 2h9v14H1z" fill="#d69d1f" stroke="#b67f10"/><path d="M3 6h15v3L3 16z" fill="#f7dc8c"/>${folderMark[kind]}</svg>
      <span class=${classMap({ sel: i === 0 })}>${name}</span></li>`;
  }

  private param(name: string, desc: string) {
    return html`<tr><td class="ci"><svg width="18" height="12" viewBox="0 0 18 12"><path d="M0 6h7M8 1v10M16 1v10" stroke="#888" stroke-width="2" fill="none"/><path d="M9 3h6v6H9z" fill="#aaa" stroke="#888" stroke-width="1.500"/></svg></td>
      <td><span class="split">${name}<i>=</i></span></td><td>0</td><td class="dim">0</td><td>${desc}</td></tr>`;
  }

  render() {
    const lens = svg`<path d="M16 16l6 6" stroke="#444" stroke-width="4" stroke-linecap="round"/><circle cx="11" cy="10" r="8" fill="#f8f8f8" stroke="#777" stroke-width="2"/>`;
    const view: [string, unknown, boolean?][] = [
      ["Zoom region", svg`<path d="M1 12V1h11" fill="none" stroke="#d06a2a" stroke-width="1.500" stroke-dasharray="2 1.500"/>${lens}<path d="M7 10h8M11 6v8" stroke="#c8581a" stroke-width="2"/>`],
      ["Pan", svg`<path d="M12 4v16M4 12h16" stroke="#e08a1e" stroke-width="2.600"/><path d="M12 0l4 6H8zM12 24l4-6H8zM0 12l6-4v8zM24 12l-6-4v8z" fill="#e08a1e"/>`],
      ["Rotate", svg`<circle cx="12" cy="12" r="10.500" fill="#6f6f6f"/><path d="M4 6a10 10 0 0 1 16 0l-8 4z" fill="#a5a5a5"/><path d="M0 14c0-5 7-6 11-6v3c-4 0-7 1-7 3 3 2 9 1 12-2l-3-3 11-3-1 10-3-2c-6 6-19 6-20 0z" fill="#f09a2c" stroke="#b5620d" stroke-width=".8"/>`, true],
      ["Zoom", svg`${lens}<path d="M11 4l4 5H7zM11 16l4-5H7z" fill="#c8581a"/>`],
      ["Reset view", svg`<path d="M4 8c-4 6 0 14 8 14s11-8 7-14" fill="none" stroke="#e9952a" stroke-width="4"/><path d="M14 4l9-4-1 11z" fill="#e9952a"/><circle cx="12" cy="12" r="5" fill="#888"/>`],
    ];
    const view2: [string, unknown][] = [
      ["Fit", svg`<rect x="1" y="1" width="22" height="22" fill="#f8f8f8" stroke="#999" stroke-width="2"/><path d="M5 5l5 5M19 5l-5 5M5 19l5-5M19 19l-5-5" stroke="#c8581a" stroke-width="2"/><path d="M4 4h6l-6 6zM20 4v6l-6-6zM4 20v-6l6 6zM20 20h-6l6-6z" fill="#c8581a"/>`],
      ["Cut plane", svg`<path d="M1 21L23 2" stroke="#444" stroke-width="4" stroke-linecap="round"/><path d="M6 9h11l3-2v12l-3 4H6z" fill="#b5683a" stroke="#7a4a2a"/><path d="M7 10h9v12H7z" fill="#d98d5c"/>`],
    ];
    const ico = (c: unknown) => html`<svg width="24" height="24" viewBox="0 0 24 24">${c}</svg>`;
    return html`
      <header class="top">
        <div class="edge"><i></i><i class="b"></i><i class="w"></i><i></i></div>
        <div class="bar">
          <div class="quick">${quick.map(([n, c]) => html`<button aria-label=${n}><svg viewBox="0 0 24 24">${c}</svg></button>`)}
            <svg viewBox="0 0 24 24" aria-hidden="true"><path d="M0 10h8" stroke="#8fa6b5" stroke-width="2"/><path d="M0 14h8l-4 5z" fill="#8fa6b5"/></svg></div>
          <h1 class="wintitle">study_csdn - CST Studio Suite 2022</h1>
          <div class="winbtns">
            <button aria-label="Minimize"><svg width="20" height="20" viewBox="0 0 20 20"><path d="M1 10h17" stroke="#fff" stroke-width="4"/></svg></button>
            <button aria-label="Restore"><svg width="20" height="20" viewBox="0 0 20 20"><path d="M2 5h12v13H2zM5 5V2h12v13h-3" fill="none" stroke="#fff" stroke-width="1.800"/></svg></button>
            <button aria-label="Close"><svg width="20" height="20" viewBox="0 0 20 20"><path d="M2 2l16 16M18 2L2 18" stroke="#fff" stroke-width="1.600"/></svg></button>
          </div>
        </div>
        <nav class="tabs">
          ${["File", "Home", "Modeling", "Simulation", "Post-Processing", "View"].map((t) => html`<button class=${classMap({ file: t === "File", on: t === this.tab })} @click=${() => (this.tab = t)}>${t}</button>`)}
          <div class="tools">
            <div class="find"><input aria-label="Search" placeholder="Search (Alt+Q)" /><svg width="24" height="24" viewBox="0 0 24 24" aria-hidden="true"><circle cx="10" cy="9" r="7" fill="none" stroke="#9a9a9a" stroke-width="2.600"/><path d="M15 14l7 8" stroke="#9a9a9a" stroke-width="4"/></svg></div>
            <svg width="14" height="12" viewBox="0 0 14 12" aria-hidden="true"><path d="M2 10l5-7 5 7" fill="none" stroke="#cfd6da" stroke-width="3"/></svg>
            <button aria-label="Help"><svg width="24" height="24" viewBox="0 0 24 24"><circle cx="12" cy="12" r="11" fill="#4a7fd6" stroke="#2c5cb0"/><path d="M8.500 9c0-5 7.500-4.500 7 0-.3 2.500-3.500 2.500-3.500 5.500" fill="none" stroke="#fff" stroke-width="2.600"/><circle cx="12" cy="18" r="1.700" fill="#fff"/></svg></button>
            <svg width="8" height="6" viewBox="0 0 8 6" aria-hidden="true"><path d="M0 0h8L4 6z" fill="#8b9399"/></svg>
          </div>
        </nav>
      </header>
      <div class="ribbon">${ribbon.map((g) => this.ribbonGroup(g))}</div>
      <div class="main">
        <aside class="nav">
          <div class="phead"><h2>Navigation Tree</h2><button aria-label="Close navigation tree">${this.close()}</button></div>
          <input class="nsearch" aria-label="Search tree" placeholder="Search" />
          <ul class="tree">${tree.map((n, i) => this.treeRow(n, i))}</ul>
        </aside>
        <section class="work">
          <div class="docs"><div class="doc">${cstLogo}<span>study_csdn*</span><button aria-label="Close document"><svg width="21" height="21" viewBox="0 0 21 21" class="dx"><rect x="1" y="1" width="19" height="19" rx="3" fill="#e07a52" stroke="#d2452c" stroke-width="2"/><path d="M6 5l9 11M15 5L6 16" stroke="#fff" stroke-width="3"/></svg></button></div></div>
          <div class="frame"><cst-viewport></cst-viewport></div>
          <div class="strip"><button class="on">3D</button><button class="schem">Schematic</button><i class="rule"></i></div>
          <div class="docks">
            <section class="dock">
              <div class="phead"><h2>Parameter List</h2><button aria-label="Close parameter list">${this.close()}</button></div>
              <div class="pane"><table>
                <thead><tr><th class="ci"><svg width="22" height="24" viewBox="0 0 22 24"><path d="M2 2h17l-6 9v10l-4-3v-7z" fill="#e8e8e8" stroke="#888" stroke-width="1.500"/></svg></th><th>Name</th><th>Expression</th><th>Value</th><th>Description</th></tr></thead>
                <tbody>${this.param("alpha", "Rotation angle of E-field Ve...")}${this.param("theta", "spherical angle of incident ...")}${this.param("phi", "spherical angle of incident ...")}
                  <tr><td class="new" colspan="5">&lt;new parameter&gt;</td></tr></tbody></table></div>
              <div class="ptabs"><button class="on">Parameter List</button><button>Result Navigator</button><i class="rule"></i></div>
            </section>
            <section class="dock">
              <div class="phead"><h2>Progress</h2><button aria-label="Close progress">${this.close()}</button></div>
              <div class="pane"><div class="item"><svg width="16" height="24" viewBox="0 0 16 24" aria-hidden="true"><path d="M1 0v14h14" fill="none" stroke="#999" stroke-dasharray="1.500 1.500"/></svg>${cstLogo}<span>study_csdn.cst</span></div></div>
              <div class="ptabs"><i class="rule"></i><button>Messages</button><button class="on">Progress</button></div>
            </section>
          </div>
        </section>
      </div>
      <footer class="status"><span>Ready</span>
        <div class="tb">
          ${view.map(([n, c, on]) => html`<button aria-label=${n} class=${classMap({ on: !!on })}>${ico(c)}</button>`)}
          <i class="sp"></i>
          ${view2.map(([n, c]) => html`<button aria-label=${n}>${ico(c)}</button>`)}
          <button aria-label="View mode"><svg width="46" height="24" viewBox="0 0 46 24"><path d="M12 6l11-5 11 5v12l-11 5-11-5zM12 6l11 5 11-5M23 11v12" fill="#e9e9e9" stroke="#888" stroke-width="2"/><path d="M38 19h8l-4 4z" fill="#777"/></svg></button>
          <i class="sp"></i>
          <button aria-label="Add plot">${ico(svg`<rect x="1" y="5" width="22" height="18" fill="#f8f8f8" stroke="#888" stroke-width="1.500"/><path d="M5 8v12" stroke="#222" stroke-width="2"/><path d="M5 15l4-4 4 7 4-4" fill="none" stroke="#c22" stroke-width="1.600"/><path d="M16 17h5M16 20h5" stroke="#777"/><circle cx="17" cy="7" r="7" fill="#3fae49"/><path d="M13 7h8M17 3v8" stroke="#fff" stroke-width="2.200"/>`)}</button>
          <span class="raster">Raster=1.000</span><i class="v"></i><span class="grey">Surfaces</span><i class="v"></i><span class="grey">Normal</span><i class="v"></i>
          <span class="units">mm, GHz, ns, K<span class="wm">CSDN @帅王小剑</span></span><i class="v"></i>
        </div>
      </footer>
      <div class="task" aria-hidden="true"><i></i><i></i><i></i><i></i><i></i></div>
      <solver-dialog class="float"></solver-dialog>
    `;
  }
}
